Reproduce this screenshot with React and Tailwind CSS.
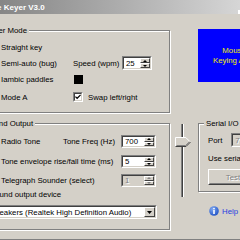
import React from "react";

function Sunken({ className = "", innerClassName = "", children }) {
  return (
    <div
      className={
        "border border-t-[#808080] border-l-[#808080] border-r-white border-b-white " +
        className
      }
    >
      <div
        className={
          "w-full h-full flex border border-t-[#404040] border-l-[#404040] border-r-[#d4d0c8] border-b-[#d4d0c8] " +
          innerClassName
        }
      >
        {children}
      </div>
    </div>
  );
}

function Tri({ up = false, color = "#000", w = 5, h = 3 }) {
  const pts = up ? `0,${h} ${w},${h} ${w / 2},0` : `0,0 ${w},0 ${w / 2},${h}`;
  return (
    <svg width={w} height={h} viewBox={`0 0 ${w} ${h}`} className="block">
      <polygon points={pts} fill={color} />
    </svg>
  );
}

function SpinBtn({ up, disabled }) {
  return (
    <div className="flex-1 flex items-center justify-center bg-[#d4d0c8] border border-t-white border-l-white border-r-[#404040] border-b-[#404040]">
      <Tri up={up} w={4} h={2} color={disabled ? "#808080" : "#000"} />
    </div>
  );
}

function Spin({ value, className = "", disabled = false }) {
  return (
    <Sunken className={"h-[13px] shrink-0 " + className}>
      <div
        className={
          "flex-1 flex items-center pl-[2px] " +
          (disabled
            ? "bg-[#d4d0c8] text-[#808080] [text-shadow:1px_1px_0_#fff]"
            : "bg-white")
        }
      >
        {value}
      </div>
      <div className="w-[10px] flex flex-col">
        <SpinBtn up disabled={disabled} />
        <SpinBtn disabled={disabled} />
      </div>
    </Sunken>
  );
}

function Checkbox() {
  return (
    <Sunken className="w-[10px] h-[10px] shrink-0" innerClassName="bg-white items-center justify-center">
      <svg width="7" height="6" viewBox="0 0 7 6" className="block">
        <path d="M0.5 2.5 L2.5 4.5 L6.5 0.5" stroke="#000" strokeWidth="1.4" fill="none" />
      </svg>
    </Sunken>
  );
}

function HelpIcon() {
  return (
    <svg width="10" height="10" viewBox="0 0 10 10" className="block shrink-0">
      <defs>
        <radialGradient id="hg" cx="0.35" cy="0.3" r="0.8">
          <stop offset="0" stopColor="#7fa8f0" />
          <stop offset="1" stopColor="#1c4fc4" />
        </radialGradient>
      </defs>
      <circle cx="5" cy="5" r="4.8" fill="url(#hg)" />
      <circle cx="5" cy="2.6" r="0.9" fill="#fff" />
      <rect x="4.2" y="4" width="1.6" height="4" fill="#fff" />
    </svg>
  );
}

function Thumb() {
  return (
    <svg width="16" height="10" viewBox="0 0 16 10" className="block">
      <polygon points="0,0 11,0 16,5 11,10 0,10" fill="#d4d0c8" />
      <path d="M0.5 9.5 V0.5 H10.8 L14.8 4.5" stroke="#fff" strokeWidth="1" fill="none" />
      <path d="M0.5 9.5 H11 L15.5 5" stroke="#404040" strokeWidth="1" fill="none" />
      <path d="M1.5 8.5 H10.6 L14.2 5" stroke="#808080" strokeWidth="1" fill="none" />
    </svg>
  );
}

const groupCls =
  "border border-[#808080] shadow-[inset_1px_1px_0_#fff,1px_1px_0_#fff]";
const legendCls = "px-[2px] bg-[#d4d0c8] leading-[9px] whitespace-nowrap";

export default function App() {
  return (
    <div className="w-[240px] h-[240px] overflow-hidden bg-[#d4d0c8] flex flex-col text-black text-[7.8px] leading-[9px] font-['Liberation_Sans',Arial,sans-serif]">
      {/* title bar */}
      <div className="h-[14px] shrink-0 flex items-center bg-linear-to-r from-[#868686] to-[#d6d6d6]">
        <span className="-ml-[22px] font-bold text-white text-[8px] whitespace-nowrap">
          Morse Keyer V3.0
        </span>
        <div className="ml-auto self-end w-[2px] h-[4px] bg-white" />
      </div>

      {/* row 1 */}
      <div className="flex items-start shrink-0">
        <fieldset className={"-ml-[22px] w-[192px] shrink-0 mt-[12px] " + groupCls}>
          <legend className={"ml-[4px] " + legendCls}>Keyer Mode</legend>
          <div className="pl-[22px] pt-[5px] pb-[8px] flex flex-col gap-[2px] whitespace-nowrap">
            <div className="h-[14px] flex items-center">Straight key</div>
            <div className="h-[14px] flex items-center">
              <span className="w-[72px] shrink-0">Semi-auto (bug)</span>
              <span className="w-[49px] shrink-0">Speed (wpm)</span>
              <Spin value="25" className="w-[30px] h-[14px]" />
            </div>
            <div className="h-[14px] flex items-center">
              <span className="w-[73px] shrink-0">Iambic paddles</span>
              <div className="w-[9px] h-[9px] bg-black" />
            </div>
            <div className="h-[14px] mt-[2px] flex items-center">
              <span className="w-[72px] shrink-0">Mode A</span>
              <Checkbox />
              <span className="ml-[5px]">Swap left/right</span>
            </div>
          </div>
        </fieldset>
        <div className="ml-[28px] mt-[15px] w-[72px] h-[53px] shrink-0 bg-[#0000ff] text-[#f0f000] flex flex-col items-center justify-center text-center leading-[10px] whitespace-nowrap">
          <span>Mouse</span>
          <span>Keying Area</span>
        </div>
      </div>

      {/* row 2 */}
      <div className="flex items-start shrink-0">
        <fieldset className={"-ml-[22px] w-[192px] shrink-0 mt-[6px] " + groupCls}>
          <legend className={"ml-[4px] " + legendCls}>Sound Output</legend>
          <div className="pl-[22px] pt-[7px] pb-[10px] flex flex-col whitespace-nowrap">
            <div className="h-[13px] flex items-center">
              <span className="w-[62px] shrink-0">Radio Tone</span>
              <span className="w-[58px] shrink-0">Tone Freq (Hz)</span>
              <Spin value="700" className="w-[35px]" />
            </div>
            <div className="h-[13px] mt-[7px] flex items-center">
              <span className="w-[120px] shrink-0">Tone envelope rise/fall time (ms)</span>
              <Spin value="5" className="w-[35px]" />
            </div>
            <div className="h-[13px] mt-[6px] flex items-center">
              <span className="w-[120px] shrink-0">Telegraph Sounder (select)</span>
              <Spin value="1" disabled className="w-[35px]" />
            </div>
            <div className="mt-[3px] h-[9px] -ml-[11px]">Sound output device</div>
            <Sunken className="mt-[6px] -ml-[14px] w-[170px] h-[14px] shrink-0" innerClassName="bg-white">
              <div className="flex-1 flex items-center pl-[1px] overflow-hidden">
                Speakers (Realtek High Definition Audio)
              </div>
              <div className="w-[11px] flex items-center justify-center bg-[#d4d0c8] border border-t-white border-l-white border-r-[#404040] border-b-[#404040]">
                <Tri w={5} h={3} />
              </div>
            </Sunken>
          </div>
        </fieldset>

        {/* slider */}
        <div className="ml-[5px] mt-[11px] w-[16px] h-[73px] shrink-0 relative flex pl-[6px]">
          <div className="w-[3px] h-full border-l border-r border-l-[#808080] border-r-white bg-[#404040]" />
          <div className="absolute left-0 top-[13px]">
            <Thumb />
          </div>
        </div>

        {/* serial + help */}
        <div className="ml-[7px] mt-[6px] shrink-0 flex flex-col">
          <fieldset className={"w-[70px] " + groupCls}>
            <legend className={"ml-[5px] " + legendCls}>Serial I/O</legend>
            <div className="pl-[9px] pt-[5px] pb-[6px] flex flex-col whitespace-nowrap">
              <div className="h-[14px] flex items-center">
                <span>Port</span>
                <Sunken className="ml-[9px] w-[30px] h-[14px]" innerClassName="bg-[#d4d0c8] items-center pl-[2px] text-[#808080] [text-shadow:1px_1px_0_#fff]">
                  7
                </Sunken>
              </div>
              <div className="mt-[7px] h-[9px]">Use serial port</div>
              <div className="mt-[6px] w-[50px] h-[16px] border border-t-white border-l-white border-r-[#404040] border-b-[#404040]">
                <div className="w-full h-full flex items-center justify-center border border-transparent border-r-[#808080] border-b-[#808080] text-[#808080] [text-shadow:1px_1px_0_#fff]">
                  Test
                </div>
              </div>
            </div>
          </fieldset>
          <div className="mt-[14px] ml-[11px] h-[10px] flex items-center whitespace-nowrap">
            <HelpIcon />
            <span className="ml-[3px] text-[#1f3fe0]">Help</span>
          </div>
        </div>
      </div>

      <div className="mt-[9px] h-[2px] shrink-0 border-t border-t-[#808080] border-b border-b-white" />
    </div>
  );
}
